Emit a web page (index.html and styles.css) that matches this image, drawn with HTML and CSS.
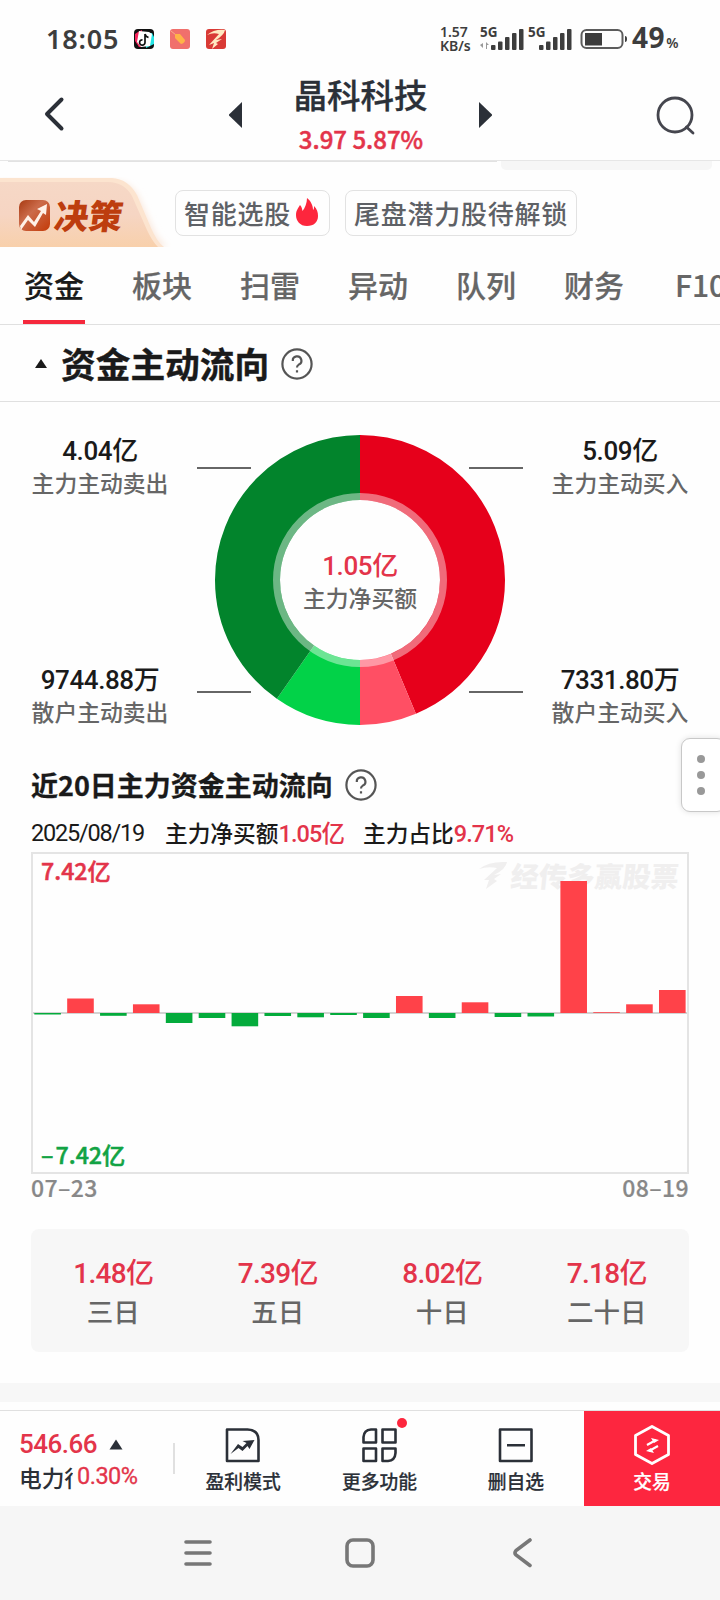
FILE: index.html
```html
<!DOCTYPE html>
<html lang="zh-CN">
<head>
<meta charset="UTF-8">
<meta name="viewport" content="width=device-width, initial-scale=1.0">
<title>晶科科技</title>
<link rel="stylesheet" href="styles.css">
</head>
<body>
<div class="page">
  <div class="status">
    <span class="time">18:05</span>
    <svg class="app-icon" width="20" height="20" viewBox="0 0 20 20">
      <rect width="20" height="20" rx="4" fill="#111"/>
      <path d="M1 5L4 3L8 1V18H5L1 12Z" fill="#f5245c"/>
      <path d="M12 4H18L20 8V15L12 19Z" fill="#25e5e5"/>
      <path d="M5 2L15 3L18 5L16 17L7 18L3 13Z" fill="#fff"/>
      <path d="M11 5V13.5A2.7 2.7 0 1 1 8.5 10.8M11 5Q12 8 14.5 8.3" fill="none" stroke="#111" stroke-width="1.7"/>
    </svg>
    <svg class="app-icon" width="20" height="20" viewBox="0 0 20 20">
      <rect width="20" height="20" rx="3" fill="#f0706c"/>
      <path d="M1 2L6 6" stroke="#f8b08a" stroke-width="1"/>
      <path d="M5 5L10 5L15 11Q15 14 11 15L5 9Z" fill="#ffb347"/>
    </svg>
    <svg class="app-icon" width="20" height="20" viewBox="0 0 20 20">
      <rect width="20" height="20" rx="3" fill="#d93a35"/>
      <path d="M1 6Q8 0 19 1Q18 6 10 11L16 10L10 14L12 15L6 20L8 14L3 16L13 5Q7 3 1 6Z" fill="#ffe9c0"/>
    </svg>
    <div class="status-right">
      <div class="speed"><span>1.57</span><span>KB/s</span></div>
      <svg class="signal" width="44" height="24" viewBox="0 0 44 24">
        <text x="0" y="10">5G</text>
        <path d="M3 16V21L0 18ZM6 22V15L9 18H7V22Z" fill="#999"/>
        <g fill="#3d3d3d"><rect x="11" y="18" width="4.500" height="5" rx="1"/><rect x="18" y="14.500" width="4.500" height="8.500" rx="1"/><rect x="25" y="10" width="4.500" height="13" rx="1"/><rect x="32" y="6" width="4.500" height="17" rx="1"/><rect x="39" y="2" width="4.500" height="21" rx="1"/></g>
      </svg>
      <svg class="signal" width="44" height="24" viewBox="0 0 44 24">
        <text x="0" y="10">5G</text>
        <g fill="#3d3d3d"><rect x="11" y="18" width="4.500" height="5" rx="1"/><rect x="18" y="14.500" width="4.500" height="8.500" rx="1"/><rect x="25" y="10" width="4.500" height="13" rx="1"/><rect x="32" y="6" width="4.500" height="17" rx="1"/><rect x="39" y="2" width="4.500" height="21" rx="1"/></g>
      </svg>
      <svg class="battery" width="48" height="22" viewBox="0 0 48 22">
        <rect x="1.500" y="2" width="41" height="18" rx="5" fill="none" stroke="#5c5c5c" stroke-width="2"/>
        <rect x="5" y="5" width="17" height="12.500" fill="#3d3d3d"/>
        <path d="M45 8Q47 8 47 11T45 14Z" fill="#3d3d3d"/>
      </svg>
      <span class="percent">49<small>%</small></span>
    </div>
  </div>

  <header class="header">
    <svg class="back" width="24" height="38" viewBox="0 0 24 38"><path d="M18.500 4.500L4 19L18.500 33.500" fill="none" stroke="#2b3038" stroke-width="4" stroke-linecap="round" stroke-linejoin="round"/></svg>
    <svg class="prev" width="14" height="28" viewBox="0 0 14 28"><path d="M14 1V27L1 14.500V13.500Z" fill="#2b3038"/></svg>
    <div class="stock">
      <h1>晶科科技</h1>
      <p>3.97 5.87%</p>
    </div>
    <svg class="next" width="14" height="28" viewBox="0 0 14 28"><path d="M0 1V27L13 14.500V13.500Z" fill="#2b3038"/></svg>
    <svg class="search" width="42" height="42" viewBox="0 0 42 42"><circle cx="20" cy="20" r="17" fill="none" stroke="#45464e" stroke-width="2.800"/><path d="M31.500 32L38 38" stroke="#45464e" stroke-width="2.800" stroke-linecap="round"/></svg>
  </header>

  <div class="promo">
    <div class="scrolled-line"></div>
    <div class="scrolled-card"></div>
    <div class="decision">
      <svg class="decision-bg" width="172" height="70" viewBox="0 0 172 70">
        <defs>
          <linearGradient id="peach" x1="0" y1="0" x2="0" y2="1"><stop offset="0" stop-color="#f6d8c6"/><stop offset=".5" stop-color="#f6d5c3"/><stop offset="1" stop-color="#f8d0ab"/></linearGradient>
          <linearGradient id="rust" x1="0" y1="0" x2="1" y2="1"><stop offset="0" stop-color="#a83a12"/><stop offset=".4" stop-color="#cb6b4a"/><stop offset="1" stop-color="#c43a08"/></linearGradient>
          <filter id="soft" x="-10%" y="-10%" width="125%" height="120%"><feGaussianBlur stdDeviation="3"/></filter>
        </defs>
        <path d="M0 4H116Q132 5 140 22L153 51Q157 62 168 70H0Z" fill="#fae9de" filter="url(#soft)"/>
        <path d="M0 1H112Q128 2 137 18L151 51Q157 65 164 70H0Z" fill="#fce4cf"/>
        <path d="M0 5H108Q124 5 132 19L147 53Q152 64 158 70H0Z" fill="url(#peach)"/>
        <rect x="19" y="23" width="31" height="31" rx="7" fill="url(#rust)"/>
        <path d="M20 49L28 38L34 45L41 34L37 32L47 27L46 38L43 36L35 50L28 43L21 53Z" fill="#fff1e8"/>
      </svg>
      <span>决策</span>
    </div>
    <div class="chip"><span>智能选股</span>
      <svg width="22" height="28" viewBox="0 0 22 28"><path d="M11 28C4 28 0 23 0 17C0 12 3 9 4 7C6 9 6 11 6.500 13C9 10 11 5 11 0C15 3 17 8 17 12C18 11 18 10 18 8C21 11 22 14 22 18C22 24 18 28 11 28Z" fill="#fd263d"/></svg>
    </div>
    <div class="chip"><span>尾盘潜力股待解锁</span></div>
  </div>

  <nav class="tabs">
    <a class="active">资金</a>
    <a>板块</a>
    <a>扫雷</a>
    <a>异动</a>
    <a>队列</a>
    <a>财务</a>
    <a class="f10">F10</a>
  </nav>

  <div class="section-title">
    <svg class="caret" width="14" height="11" viewBox="0 0 14 11"><path d="M7 1L13 10H1Z" fill="#1a1a1a"/></svg>
    <h2>资金主动流向</h2>
    <svg width="32" height="32" viewBox="0 0 32 32" class="help"><circle cx="16" cy="16" r="14.600"/><path d="M11.800 13A4.300 4.300 0 1 1 17.800 16.600Q16 17.600 16 19.600M16 22.200V24.400"/></svg>
  </div>

  <div class="flow">
    <div class="flow-side">
      <div class="flow-item"><b>4.04亿</b><span>主力主动卖出</span></div>
      <div class="flow-item"><b>9744.88万</b><span>散户主动卖出</span></div>
    </div>
    <div class="donut">
      <svg width="326" height="290" viewBox="0 0 326 290">
        <path d="M0 33H54M272 33H326M0 257H54M272 257H326" stroke="#666" stroke-width="2"/>
        <g class="ring" fill="none" stroke-width="65" transform="rotate(-90 163 145)">
          <circle cx="163" cy="145" r="112.500" pathLength="360" stroke="#e6001b" stroke-dasharray="157.300 360"/>
          <circle cx="163" cy="145" r="112.500" pathLength="360" stroke="#ff4f64" stroke-dasharray="22.700 360" stroke-dashoffset="-157.300"/>
          <circle cx="163" cy="145" r="112.500" pathLength="360" stroke="#02d248" stroke-dasharray="35 360" stroke-dashoffset="-180"/>
          <circle cx="163" cy="145" r="112.500" pathLength="360" stroke="#02842c" stroke-dasharray="145 360" stroke-dashoffset="-215"/>
        </g>
        <circle cx="163" cy="145" r="83.500" fill="none" stroke="#fff" stroke-opacity=".42" stroke-width="7"/>
      </svg>
      <div class="donut-text"><b>1.05亿</b><span>主力净买额</span></div>
    </div>
    <div class="flow-side">
      <div class="flow-item"><b>5.09亿</b><span>主力主动买入</span></div>
      <div class="flow-item"><b>7331.80万</b><span>散户主动买入</span></div>
    </div>
  </div>

  <div class="sub-title">
    <h3>近20日主力资金主动流向</h3>
    <svg width="32" height="32" viewBox="0 0 32 32" class="help"><circle cx="16" cy="16" r="14.600"/><path d="M11.800 13A4.300 4.300 0 1 1 17.800 16.600Q16 17.600 16 19.600M16 22.200V24.400"/></svg>
  </div>
  <div class="info">
    <span class="date">2025/08/19</span>
    <span class="net">主力净买额<b>1.05亿</b></span>
    <span>主力占比<b>9.71%</b></span>
  </div>

  <div class="chart">
    <div class="watermark">
      <svg width="28" height="28" viewBox="0 0 28 28"><path d="M0 8Q10 0 28 1Q27 8 15 14L22 13L15 18L18 20L7 28L10 19L5 19L18 7Q9 5 0 8Z" fill="#f0efef"/></svg>
      <span>经传多赢股票</span>
    </div>
    <svg class="bars" id="bars" width="654" height="318" viewBox="0 0 654 318"></svg>
    <span class="max">7.42亿</span>
    <span class="min"><i>–</i>7.42亿</span>
  </div>
  <div class="axis"><span>07–23</span><span>08–19</span></div>

  <div class="totals">
    <div><b>1.48亿</b><span>三日</span></div>
    <div><b>7.39亿</b><span>五日</span></div>
    <div><b>8.02亿</b><span>十日</span></div>
    <div><b>7.18亿</b><span>二十日</span></div>
  </div>

  <div class="band"></div>

  <footer class="toolbar">
    <div class="index">
      <div class="index-row">
        <b>546.66</b>
        <svg width="14" height="11" viewBox="0 0 14 11"><path d="M7 0.500L13.500 10.500H0.500Z" fill="#2b3038"/></svg>
      </div>
      <div class="index-row"><span class="index-name">电力行业</span><em>0.30%</em></div>
    </div>
    <div class="tool">
      <svg width="36" height="36" viewBox="0 0 36 36" fill="none" stroke="#2b3038" stroke-width="2.600" stroke-linejoin="round"><path d="M2 2.500H22.500Q33.500 3 33.500 13V34H2Z"/><path d="M5.500 27L13 17L17.500 20L21.500 16L17.500 14L29.500 13L24.500 22L22.500 19L17.500 24L13.500 21Z" fill="#2b3038" stroke="none"/></svg>
      <span>盈利模式</span>
    </div>
    <div class="tool">
      <svg width="36" height="36" viewBox="0 0 36 36" fill="none" stroke="#2b3038" stroke-width="2.600" stroke-linejoin="round"><path d="M10 2.500H15V15.500H2.500V10Q3 3 10 2.500ZM21.500 2.500H34.500V15.500H21.500ZM2.500 21.500H15V34H2.500ZM21.500 21.500H34.500V26Q34 33.500 27 34H21.500Z"/></svg>
      <span>更多功能</span>
      <i class="dot"></i>
    </div>
    <div class="tool">
      <svg width="36" height="36" viewBox="0 0 36 36" fill="none" stroke="#2b3038" stroke-width="2.600" stroke-linejoin="round"><path d="M2 2.500H33.500V34H2ZM9 18.300H27"/></svg>
      <span>删自选</span>
    </div>
    <div class="tool trade">
      <svg width="38" height="42" viewBox="0 0 38 42" fill="none" stroke="#fff" stroke-width="2.800" stroke-linejoin="round"><path d="M19 2.500L35.500 11.500V30.500L19 39.500L2.500 30.500V11.500Z"/><path d="M14 21L23 16M25 22L16 27" stroke-width="2.200"/><path d="M18 14L26 16L21 19ZM21 29L13 27L18 24Z" fill="#fff" stroke="none"/></svg>
      <span>交易</span>
    </div>
  </footer>

  <div class="sysnav">
    <svg width="28" height="28" viewBox="0 0 28 28"><path d="M2 3H26M2 14H26M2 25H26"/></svg>
    <svg class="home" width="32" height="32" viewBox="0 0 32 32"><rect x="3" y="3" width="26" height="26" rx="6"/></svg>
    <svg width="20" height="30" viewBox="0 0 20 30"><path d="M17 2L3 12.500Q1 15 3 17L17 27.500"/></svg>
  </div>

  <div class="float-btn"><i></i><i></i><i></i></div>
</div>

<script>
// 近20日主力净买额柱高，正数为买入，负数为卖出
const flows = [-1.5, 14.5, -2.8, 8.7, -10, -5, -13.3, -3, -4.3, -2,
  -5, 17, -5, 10.7, -4, -3.5, 132, 0.8, 8.7, 23];
const zero = 159;
let out = '<path d="M0 159H654" stroke="#c4c4c4" stroke-width="1.5"/>';
flows.forEach((v, i) => {
  const x = 1.3 + i * 32.88;
  const y = v > 0 ? zero - v : zero;
  const color = v > 0 ? '#ff4249' : '#04ab3c';
  out += `<rect x="${x}" y="${y}" width="26.6" height="${Math.abs(v)}" fill="${color}"/>`;
});
document.getElementById('bars').innerHTML = out;
</script>
</body>
</html>
```
FILE: styles.css
```css
* {
  box-sizing: border-box;
}
body, h1, h2, h3, p {
  margin: 0;
}
body {
  font-family: "Noto Sans CJK SC", sans-serif;
  background: #fefefe;
  color: #1a1a1a;
}
svg {
  display: block;
  flex: none;
}
b, em, i {
  font-style: normal;
  font-weight: 500;
}
.page {
  position: relative;
  width: 720px;
  height: 1600px;
  overflow: hidden;
  display: flex;
  flex-direction: column;
}
.page > * {
  flex: none;
}

/* 状态栏 */
.status {
  height: 78px;
  display: flex;
  align-items: center;
  padding: 0 41px 0 46px;
  color: #3d3d3d;
}
.time {
  width: 88px;
  font: 600 27px/40px "Noto Sans", sans-serif;
  letter-spacing: .8px;
}
.app-icon {
  margin-right: 16px;
}
.status-right {
  margin-left: auto;
  display: flex;
  align-items: center;
}
.speed {
  width: 40px;
  display: flex;
  flex-direction: column;
  font: 600 14px/14px "Noto Sans", sans-serif;
}
.signal {
  margin-right: 4px;
  overflow: visible;
}
.signal text {
  font: 700 13.500px "Noto Sans", sans-serif;
  fill: #3d3d3d;
}
.battery {
  margin-left: 4px;
}
.percent {
  margin: 2px 0 0 4px;
  font: 700 28px/40px "Noto Sans", sans-serif;
  letter-spacing: .6px;
}
.percent small {
  margin-left: 1px;
  font-size: 14px;
  font-weight: 600;
}

/* 标题栏 */
.header {
  height: 83px;
  display: flex;
  align-items: flex-start;
  border-bottom: 1px solid #e6e6e6;
}
.back {
  margin: 17px 0 0 43px;
}
.prev {
  margin: 23px 0 0 161px;
}
.stock {
  width: 238px;
  text-align: center;
}
.stock h1 {
  margin: -3px 0 0 -1px;
  font-size: 33.500px;
  line-height: 38px;
  font-weight: 500;
  color: #2b3038;
  -webkit-text-stroke: .3px;
}
.stock p {
  margin-top: 9px;
  font-size: 24px;
  line-height: 34px;
  font-weight: 500;
  color: #e3344a;
  -webkit-text-stroke: .5px;
}
.next {
  margin: 23px 0 0 -1px;
}
.search {
  margin: 17px 0 0 162px;
}

/* 决策与推荐 */
.promo {
  position: relative;
  height: 86px;
  display: flex;
  align-items: flex-start;
}
.scrolled-line {
  position: absolute;
  left: 8px;
  top: 0;
  width: 489px;
  height: 1px;
  background: #e2e2e2;
}
.scrolled-card {
  position: absolute;
  left: 501px;
  top: 0;
  width: 211px;
  height: 9px;
  background: #f6f6f6;
  border-radius: 0 0 5px 5px;
}
.decision {
  position: relative;
  width: 175px;
  height: 86px;
}
.decision-bg {
  margin-top: 16px;
}
.decision span {
  position: absolute;
  left: 55px;
  top: 35px;
  font-size: 34px;
  line-height: 38px;
  font-weight: 900;
  color: #bd3d0e;
  transform: skewX(-8deg);
}
.chip {
  height: 46px;
  margin: 29px 15px 0 0;
  padding: 0 8px;
  display: flex;
  align-items: center;
  border: 1px solid #e2e2e2;
  border-radius: 8px;
  font-size: 26px;
  letter-spacing: .75px;
  font-weight: 500;
  color: #5e6166;
  white-space: nowrap;
}
.chip span {
  margin-top: -2px;
}
.chip svg {
  margin: 0 3px 2px 5px;
}

/* 标签 */
.tabs {
  height: 78px;
  padding-left: 23px;
  display: flex;
  gap: 46px;
  border-bottom: 1px solid #e0e0e0;
}
.tabs a {
  flex: none;
  width: 62px;
  padding-top: 12px;
  text-align: center;
  font-size: 30px;
  line-height: 50px;
  font-weight: 500;
  color: #666;
  -webkit-text-stroke: .2px;
}
.tabs .active {
  color: #1a1a1a;
  border-bottom: 4px solid #f5283c;
}
.tabs .f10 {
  padding-left: 4px;
  text-align: left;
}

.section-title {
  height: 77px;
  padding: 0 0 0 34px;
  display: flex;
  align-items: center;
  border-bottom: 1px solid #e0e0e0;
}
.section-title h2 {
  margin: 0 12px 0 13px;
  font-size: 34.700px;
  line-height: 50px;
  font-weight: 700;
  -webkit-text-stroke: .4px;
}
.help {
  fill: none;
  stroke: #555;
  stroke-width: 2.200;
}
.section-title .help {
  margin-top: 2px;
}

/* 环形图 */
.flow {
  height: 352px;
  padding: 33px 31px 0;
  display: flex;
  align-items: flex-start;
  justify-content: space-between;
}
.flow-side {
  width: 138px;
  height: 293px;
  display: flex;
  flex-direction: column;
  justify-content: space-between;
}
.flow-item, .donut-text {
  display: flex;
  flex-direction: column;
  align-items: center;
  white-space: nowrap;
}
.flow-item b, .donut-text b {
  font-family: Roboto, "Noto Sans CJK SC", sans-serif;
  font-size: 26px;
  line-height: 32px;
  letter-spacing: -.4px;
}
.flow-item span, .donut-text span {
  font-size: 22.800px;
  line-height: 32px;
  font-weight: 500;
  color: #666;
}
.donut {
  position: relative;
}
.donut-text {
  position: absolute;
  left: 0;
  right: 0;
  top: 115px;
}
.donut-text b {
  color: #e3344a;
}

/* 近20日 */
.sub-title {
  height: 62px;
  padding-left: 31px;
  display: flex;
  align-items: center;
  gap: 12px;
}
.sub-title h3 {
  margin-top: -2px;
  font-size: 27px;
  font-weight: 700;
  -webkit-text-stroke: .3px;
}
.info {
  height: 36px;
  margin-top: -1px;
  margin-bottom: 1px;
  padding-left: 31px;
  display: flex;
  font-size: 22.700px;
  line-height: 36px;
  font-weight: 500;
  white-space: nowrap;
}
.info b, .date {
  font-family: Roboto, "Noto Sans CJK SC", sans-serif;
  font-size: 23.500px;
  font-weight: 400;
}
.info b {
  font-weight: 500;
  letter-spacing: -.9px;
  color: #e3344a;
}
.info .date {
  width: 134px;
  letter-spacing: -1.200px;
}
.net {
  width: 198px;
}
.chart {
  position: relative;
  width: 658px;
  height: 322px;
  margin-left: 31px;
  border: 2px solid #e4e4e4;
}
.bars {
  position: relative;
}
.max, .min {
  position: absolute;
  left: 8px;
  font-size: 23.200px;
  line-height: 30px;
  font-weight: 500;
  -webkit-text-stroke: .5px;
}
.max {
  top: 1px;
  color: #e3344a;
}
.min {
  bottom: 3px;
  color: #12a344;
}
.min i {
  margin-right: 2px;
}
.watermark {
  position: absolute;
  right: 8px;
  top: 4px;
  display: flex;
  gap: 4px;
  align-items: center;
  font-size: 28px;
  line-height: 34px;
  font-weight: 900;
  color: #f0efef;
}
.watermark span {
  transform: skewX(-6deg);
}
.axis {
  height: 55px;
  margin-top: -2px;
  margin-bottom: 2px;
  padding: 0 31px;
  display: flex;
  justify-content: space-between;
  font-size: 23px;
  line-height: 30px;
  letter-spacing: .4px;
  font-weight: 500;
  color: #888;
  -webkit-text-stroke: .2px;
}
.totals {
  height: 123px;
  margin: 0 31px;
  padding-top: 25px;
  display: grid;
  grid-template-columns: repeat(4, 1fr);
  background: #f7f7f7;
  border-radius: 8px;
}
.totals div {
  display: flex;
  flex-direction: column;
  align-items: center;
}
.totals b {
  font-family: Roboto, "Noto Sans CJK SC", sans-serif;
  font-size: 28px;
  line-height: 39px;
  letter-spacing: -.7px;
  color: #e3344a;
}
.totals span {
  font-size: 26.500px;
  line-height: 36px;
  font-weight: 500;
  color: #666;
}
.band {
  height: 19px;
  margin: 31px 0 8px;
  background: #f7f7f7;
}

/* 底部工具栏 */
.toolbar {
  height: 96px;
  display: flex;
  border-top: 1px solid #e0e0e0;
}
.index {
  position: relative;
  width: 175px;
  padding: 16px 0 0 19px;
}
.index::after {
  content: "";
  position: absolute;
  right: 0;
  top: 32px;
  width: 2px;
  height: 31px;
  background: #e0e0e0;
}
.index-row {
  height: 34px;
  display: flex;
  align-items: center;
}
.index-row b {
  width: 90px;
  font: 500 26px/34px Roboto, sans-serif;
  letter-spacing: -.5px;
  color: #e3344a;
}
.index-name {
  width: 54px;
  overflow: hidden;
  white-space: nowrap;
  font-size: 22.700px;
  line-height: 34px;
  font-weight: 500;
  color: #2b3038;
}
.index-row em {
  margin: -5px 0 0 4px;
  font: 400 23.500px/30px Roboto, sans-serif;
  letter-spacing: -.5px;
  color: #e3344a;
  -webkit-text-stroke: .3px;
}
.tool {
  position: relative;
  flex: 1;
  display: flex;
  flex-direction: column;
  align-items: center;
  padding-top: 16px;
  color: #2b3038;
}
.tool span {
  margin-top: 4px;
  font-size: 18.800px;
  line-height: 28px;
  font-weight: 500;
  -webkit-text-stroke: .2px;
}
.dot {
  position: absolute;
  left: 86px;
  top: 7px;
  width: 10px;
  height: 10px;
  border-radius: 50%;
  background: #fd263d;
}
.trade {
  flex: none;
  width: 136px;
  padding-top: 13px;
  background: #fd263f;
  color: #fff;
}
.trade span {
  margin-top: 1px;
}
.sysnav {
  height: 94px;
  padding: 0 187px 0 184px;
  display: flex;
  align-items: center;
  justify-content: space-between;
  background: #f6f6f6;
}
.sysnav svg {
  fill: none;
  stroke: #777;
  stroke-width: 3.600;
  stroke-linecap: round;
}
.sysnav .home {
  margin-right: 6px;
}

.float-btn {
  position: absolute;
  left: 681px;
  top: 738px;
  width: 45px;
  height: 74px;
  padding: 16px 0 0 15px;
  display: flex;
  flex-direction: column;
  gap: 8px;
  background: #fff;
  border: 1px solid #c8c8c8;
  border-radius: 9px;
  box-shadow: 0 0 6px rgba(0,0,0,0.12);
}
.float-btn i {
  width: 8px;
  height: 8px;
  border-radius: 50%;
  background: #999;
}
```
